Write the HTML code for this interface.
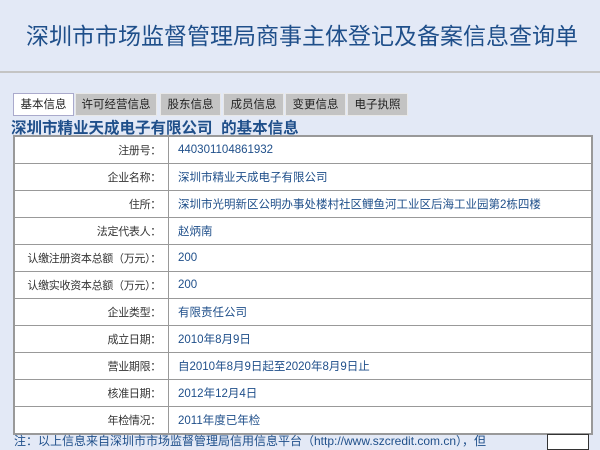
<!DOCTYPE html>
<html><head><meta charset="utf-8"><style>
body{margin:0;width:600px;height:440px;overflow:hidden;background:#e3e9f6;font-family:"Liberation Sans","Noto Sans CJK SC",sans-serif;position:relative}
.title{position:absolute;left:0;width:604px;top:17px;text-align:center;font-size:23px;color:#1f4f8a;letter-spacing:0px}
.hr{position:absolute;left:0;width:600px;top:71px;height:2px;background:#c4c4c4}
.tabs{position:absolute;top:93px;left:13px;height:23px}
.tab{position:absolute;top:0;height:23px;background:#c3c3c3;font-size:11.5px;line-height:23px;text-align:center;color:#222;box-sizing:border-box;border:1px solid #e8e8e8}
.tab.sel{background:#fff;border-color:#aac}
.h2{position:absolute;left:11px;top:116px;font-size:15.5px;font-weight:bold;color:#1f4f8a;white-space:pre}
table{position:absolute;left:13px;top:135px;width:580px;border-collapse:collapse;background:#fff;border:2px solid #999}
td{height:26px;border:1px solid #999;font-size:11.5px;padding:0}
td.l{width:146px;text-align:right;padding-right:7px;color:#333;font-size:11px;letter-spacing:-0.3px;white-space:nowrap}
td.v{padding-left:9px;color:#1f4f8a}
.foot{position:absolute;left:14px;top:432px;font-size:12px;color:#1f4f8a}
.btn{position:absolute;left:547px;top:434px;width:40px;height:14px;border:1px solid #333;background:#fff}
</style></head><body>
<div class="title">深圳市市场监督管理局商事主体登记及备案信息查询单</div>
<div class="hr"></div>
<div class="tabs">
<div class="tab sel" style="left:0;width:61px">基本信息</div>
<div class="tab" style="left:62px;width:82px">许可经营信息</div>
<div class="tab" style="left:147px;width:61px">股东信息</div>
<div class="tab" style="left:210px;width:61px">成员信息</div>
<div class="tab" style="left:272px;width:61px">变更信息</div>
<div class="tab" style="left:334px;width:61px">电子执照</div>
</div>
<div class="h2">深圳市精业天成电子有限公司  的基本信息</div>
<table>
<tr><td class="l">注册号：</td><td class="v">440301104861932</td></tr>
<tr><td class="l">企业名称：</td><td class="v">深圳市精业天成电子有限公司</td></tr>
<tr><td class="l">住所：</td><td class="v">深圳市光明新区公明办事处楼村社区鲤鱼河工业区后海工业园第2栋四楼</td></tr>
<tr><td class="l">法定代表人：</td><td class="v">赵炳南</td></tr>
<tr><td class="l">认缴注册资本总额（万元）：</td><td class="v">200</td></tr>
<tr><td class="l">认缴实收资本总额（万元）：</td><td class="v">200</td></tr>
<tr><td class="l">企业类型：</td><td class="v">有限责任公司</td></tr>
<tr><td class="l">成立日期：</td><td class="v">2010年8月9日</td></tr>
<tr><td class="l">营业期限：</td><td class="v">自2010年8月9日起至2020年8月9日止</td></tr>
<tr><td class="l">核准日期：</td><td class="v">2012年12月4日</td></tr>
<tr><td class="l">年检情况：</td><td class="v">2011年度已年检</td></tr>
</table>
<div class="foot">注：以上信息来自深圳市市场监督管理局信用信息平台（http://www.szcredit.com.cn），但</div>
<div class="btn"></div>
</body></html>
